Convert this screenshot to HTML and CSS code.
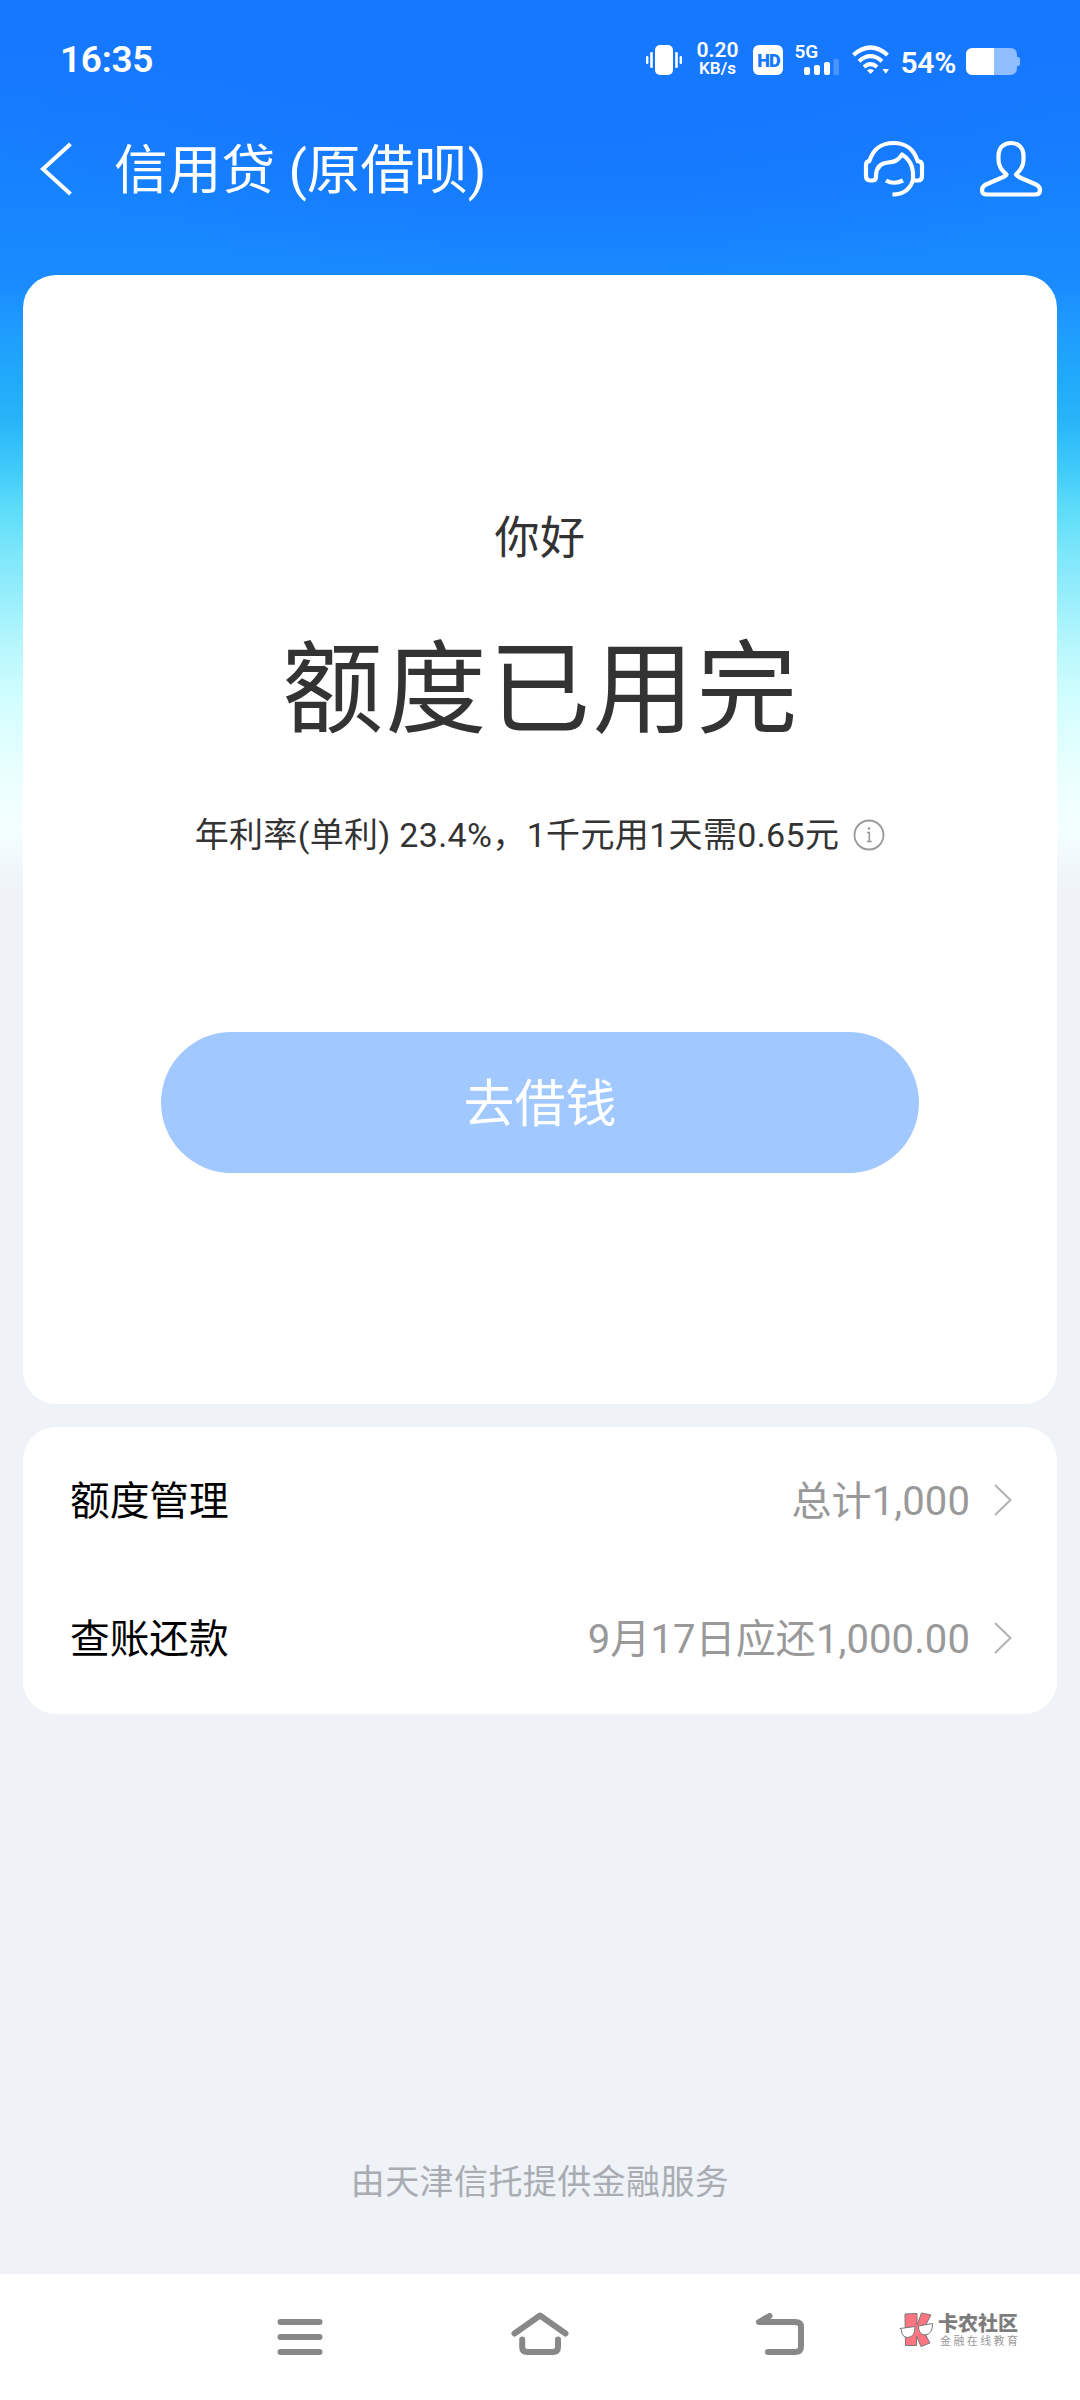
FILE: index.html
```html
<!DOCTYPE html>
<html lang="zh-CN">
<head>
<meta charset="utf-8">
<title>信用贷</title>
<link rel="stylesheet" href="styles.css">
</head>
<body>
<div class="screen">
  <header class="status-bar">
    <span class="clock">16:35</span>
    <div class="status-icons">
      <svg class="ic-vibrate" width="38" height="34" viewBox="0 0 38 34" fill="#fff"><rect x="10" y="2" width="18" height="30" rx="5"/><rect x="5.2" y="9" width="2.6" height="16" rx="1.3"/><rect x="1" y="13" width="2.4" height="8" rx="1.2"/><rect x="30.2" y="9" width="2.6" height="16" rx="1.3"/><rect x="34.6" y="13" width="2.4" height="8" rx="1.2"/></svg>
      <div class="speed"><span class="speed-num">0.20</span><span class="speed-unit">KB/s</span></div>
      <span class="hd">HD</span>
      <div class="signal">
        <span class="net">5G</span>
        <svg width="36" height="18" viewBox="0 0 36 18" fill="#fff"><rect x="0" y="9" width="6" height="8" rx="2"/><rect x="10" y="7" width="6" height="10" rx="2"/><rect x="20" y="4" width="6" height="13" rx="2"/><rect x="29.500" y="1" width="5.500" height="16" rx="1.500" opacity=".22"/></svg>
      </div>
      <svg class="ic-wifi" width="38" height="32" viewBox="0 0 38 32" fill="none" stroke="#fff" stroke-width="4.200"><path d="M1.500 11Q18.500-4 35.500 11"/><path d="M7 17.200Q18.500 7 30 17.200"/><path d="M12 23Q18.500 17.300 25 23"/><path d="M15.500 26.500Q18.500 24.500 21.500 26.500L18.500 29.500Z" fill="#fff" stroke="#fff" stroke-width="1"/><path d="M30.500 25h6.500l-3.200 4.800z" fill="#fff" stroke="none"/></svg>
      <span class="percent">54%</span>
      <svg class="ic-battery" width="55" height="28" viewBox="0 0 55 28"><path d="M7 0H44Q51 0 51 7V9H52Q54 9 54 11V16Q54 18 52 18H51V20Q51 27 44 27H7Q0 27 0 20V7Q0 0 7 0Z" fill="#8fbdff"/><path d="M7 0H28V27H7Q0 27 0 20V7Q0 0 7 0Z" fill="#fff"/></svg>
    </div>
  </header>

  <nav class="title-bar">
    <svg class="ic-back" width="34" height="56" viewBox="0 0 34 56" fill="none" stroke="#fff" stroke-width="4"><path d="M30.500 3L3 28L30.500 53"/></svg>
    <h1 class="title">信用贷 (原借呗)</h1>
    <svg class="ic-service" width="62" height="60" viewBox="0 0 62 60" fill="none" stroke="#fff" stroke-width="4.200" stroke-linejoin="round"><path d="M6.500 21C10 9 19 3 30.500 3S51 9 54.500 21"/><path d="M13 35V37Q13 40.500 9.500 40.500H7Q3 40.500 3 36V25Q3 20.800 7.500 20.800H8"/><path d="M53 20.800Q59 20.800 59 25V36Q59 40.500 55 40.500H50V32C49 24 45 18 39 14.500C35 21 31 22 25 22.500C17 23 13.500 28 13 35"/><path d="M50 40C47 50 40 54.500 29.500 54.500"/><path d="M23 40.500Q31 45 40 40.500"/></svg>
    <svg class="ic-user" width="64" height="60" viewBox="0 0 64 60" fill="none" stroke="#fff" stroke-width="4.200" stroke-linejoin="round"><path d="M27.500 34.500C22 30 19.500 26 19.500 20V16C19.500 7.500 25 3 32 3S44.500 7.500 44.500 16V20C44.500 26 42 30 37 34.500C38 36 40 37 42 38L57 44.500Q61 46.500 61 50Q61 54.500 56.500 54.500H8Q3 54.500 3 50Q3 46.500 7 44.500L22 38Q26.500 36.500 27.500 34.500Z"/></svg>
  </nav>

  <main class="content">
    <section class="card quota">
      <p class="hello">你好</p>
      <p class="headline">额度已用完</p>
      <p class="rate"><span>年利率(单利) 23.4%，1千元用1天需0.65元</span>
        <svg class="ic-info" width="32" height="32" viewBox="0 0 32 32" fill="none" stroke="#999" stroke-width="1.800"><circle cx="16" cy="16" r="14.500"/><path d="M14 13.500H16.300V22.500M13.800 22.500H18.800" stroke-width="1.600"/><circle cx="16" cy="9.500" r="1.300" fill="#999" stroke="none"/></svg>
      </p>
      <button class="borrow">去借钱</button>
    </section>

    <section class="card menu">
      <a class="row"><span class="label">额度管理</span><span class="value">总计1,000</span><svg class="chev" width="20" height="34" viewBox="0 0 20 34" fill="none" stroke="#b2b2b2" stroke-width="2"><path d="M2 1L17.500 16L2 31"/></svg></a>
      <a class="row"><span class="label">查账还款</span><span class="value">9月17日应还1,000.00</span><svg class="chev" width="20" height="34" viewBox="0 0 20 34" fill="none" stroke="#b2b2b2" stroke-width="2"><path d="M2 1L17.500 16L2 31"/></svg></a>
    </section>
    <p class="provider">由天津信托提供金融服务</p>
  </main>

  <footer class="sys-nav">
    <svg width="60" height="60" viewBox="0 0 60 60" fill="none" stroke="#888" stroke-width="6" stroke-linecap="round"><path d="M10.500 18H49.500M10.500 33H49.500M10.500 48H49.500"/></svg>
    <svg width="60" height="60" viewBox="0 0 60 60" fill="none" stroke="#888" stroke-width="6" stroke-linecap="round" stroke-linejoin="round"><path d="M4.500 29.500L30 11.500L55.500 29.500M12.200 35.500V43Q12.200 48 17.200 48H43Q48 48 48 43V35.500"/></svg>
    <svg width="60" height="60" viewBox="0 0 60 60" fill="none" stroke="#888" stroke-width="6" stroke-linecap="round" stroke-linejoin="round"><path d="M19.500 12L9 18H45Q51 18 51 23V42.500Q51 48 45 48H18"/></svg>
    <div class="watermark">
      <svg width="36" height="36" viewBox="0 0 36 36" stroke="#777" stroke-width="1"><path d="M6 2L18 1.500V13L22.500 1L32 3L24 18L31 31L22 34.500L17.500 24V33.500H6.500Z" fill="#ff7582"/><path d="M1 16.500L16 14.500Q16.500 25 8.500 25.500Q2.500 25 2.500 18ZM19.500 14L33.500 11.500Q34 22 26 23Q19.500 22.500 19.500 14Z" fill="#fff"/></svg>
      <div class="wm-text"><strong>卡农社区</strong><span>金融在线教育</span></div>
    </div>
  </footer>
</div>
</body>
</html>
```

FILE: styles.css
```css
* { box-sizing: border-box; margin: 0; padding: 0; }

body {
  width: 1080px;
  height: 2400px;
  font-family: Roboto, "Noto Sans CJK SC", sans-serif;
  background: #eff2f7;
}

.screen {
  width: 1080px;
  height: 2400px;
  display: flex;
  flex-direction: column;
  background:
    radial-gradient(ellipse 700px 290px at 54% 0, #1677ff 40%, rgba(22, 119, 255, 0) 100%) no-repeat 0 0 / 1080px 300px,
    linear-gradient(180deg, #1677ff 0, #1677ff 40px, #1683ff 190px, #1a8cff 285px, #1f9cff 330px, #20a8fa 374px, #28b4f8 419px, #3cc8fa 463px, #5cdcfa 508px, #7ce6fa 552px, #98eefc 597px, #b4f6fc 642px, #ccfcfe 686px, #dcfffe 731px, #ebffff 776px, #f4ffff 830px, #f0f6fa 870px, #eff2f7 905px);
}

.status-bar {
  height: 120px;
  padding: 0 59px 0 60px;
  display: flex;
  justify-content: space-between;
  align-items: center;
  color: #fff;
  font-weight: 600;
}

.clock { font-size: 37px; line-height: 40px; letter-spacing: -0.3px; }

.status-icons { display: flex; align-items: center; height: 40px; }

.speed {
  width: 42px;
  margin-left: 13px;
  display: flex;
  flex-direction: column;
  align-items: center;
}
.speed-num { font-size: 21px; line-height: 17px; }
.speed-unit { font-size: 17px; line-height: 19px; }

.hd {
  width: 30px;
  height: 30px;
  margin-left: 15px;
  border-radius: 6px;
  background: #fff;
  color: #1677ff;
  font-size: 18px;
  line-height: 31px;
  letter-spacing: -1px;
  font-weight: 900;
  text-align: center;
}

.signal { width: 46px; height: 32px; margin-left: 11px; display: flex; flex-direction: column; }
.signal svg { align-self: flex-end; margin-top: -1px; flex: none; }
.net { font-size: 19px; line-height: 15px; }

.ic-wifi { margin-left: 12px; }
.percent { margin-left: 10px; font-size: 30px; line-height: 40px; padding-top: 5px; letter-spacing: -0.3px; }
.ic-battery { margin-left: 10px; margin-top: 3px; }

.title-bar {
  height: 98px;
  padding: 2px 37px 0 40px;
  display: flex;
  align-items: center;
  color: #fff;
}
.title {
  margin-left: 40px;
  padding-top: 2px;
  flex: 1;
  font-size: 53.7px;
  line-height: 70px;
  font-weight: 400;
}
.ic-back { margin-top: -2px; }
.ic-service { margin-right: 54px; }

.content {
  flex: 1;
  padding: 57px 23px 0;
  display: flex;
  flex-direction: column;
}

.card { background: #fff; border-radius: 33px; }

.quota {
  height: 1129px;
  padding-top: 234px;
  display: flex;
  flex-direction: column;
  align-items: center;
  color: #333;
}
.hello { font-size: 45px; line-height: 60px; letter-spacing: 0.5px; }
.headline { margin-top: 61px; font-size: 101px; line-height: 122px; letter-spacing: 2.6px; padding-left: 2px; }
.rate {
  margin-top: 63px;
  display: flex;
  align-items: center;
  gap: 14px;
  font-size: 34px;
  line-height: 40px;
  letter-spacing: 0.35px;
}
.borrow {
  width: 758px;
  height: 141px;
  margin-top: 177px;
  padding-bottom: 6px;
  border: 0;
  border-radius: 71px;
  background: #a1c8ff;
  color: #fff;
  font: inherit;
  font-size: 51px;
}

.menu { height: 287px; margin-top: 23px; padding: 5px 44px 0 47px; }
.row { height: 138px; display: flex; align-items: center; font-size: 40px; line-height: 50px; }
.label { flex: 1; color: #000; font-size: 39.7px; padding-top: 2px; }
.value { color: #999; margin-right: 23px; padding-top: 2px; letter-spacing: 0.1px; }

.provider {
  margin-top: 448px;
  text-align: center;
  font-size: 34px;
  line-height: 40px;
  letter-spacing: 0.4px;
  color: #a9acb2;
}

.sys-nav {
  position: relative;
  height: 126px;
  background: #fff;
  padding: 30px 270px 0;
  display: flex;
  justify-content: space-between;
}

.watermark {
  position: absolute;
  left: 899px;
  top: 38px;
  display: flex;
  gap: 3px;
  color: #7d7d7d;
}
.wm-text { display: flex; flex-direction: column; padding-top: 1px; }
.wm-text strong { font-size: 20px; line-height: 22px; font-weight: 900; }
.wm-text span { font-size: 11px; line-height: 14px; letter-spacing: 2.4px; padding-left: 2px; color: #999; }
```
